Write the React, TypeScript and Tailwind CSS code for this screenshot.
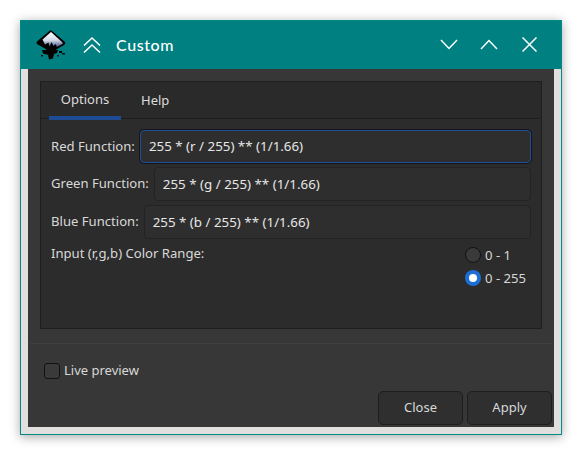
import React from 'react';

const FUNCTIONS = [
  { label: 'Red Function:', value: '255 * (r / 255) ** (1/1.66)', focused: true, height: 'h-[33px]', mt: 'mt-[11px]' },
  { label: 'Green Function:', value: '255 * (g / 255) ** (1/1.66)', focused: false, height: 'h-[34px]', mt: 'mt-[4px]' },
  { label: 'Blue Function:', value: '255 * (b / 255) ** (1/1.66)', focused: false, height: 'h-[34px]', mt: 'mt-[4px]' },
];

function InkscapeLogo() {
  return (
    <svg width="30" height="30" viewBox="0 0 30 30" className="block">
      <defs>
        <linearGradient id="ink" x1="0.5" y1="0" x2="0.55" y2="1">
          <stop offset="0" stopColor="#ffffff" />
          <stop offset="0.55" stopColor="#d5d9e6" />
          <stop offset="1" stopColor="#43558a" />
        </linearGradient>
      </defs>
      <path d="M14 0.5 Q15 0 16 1 L29 12 Q30 14 28 15 L21 19 L18 21 L11 20 L8 18 L1 14 Q0 12.5 1 11.5 Z" fill="#000000" />
      <path d="M15 2 L26 12 L27 13.5 L21 17 L19.5 14 L17.5 16 L15.5 12 L13.5 16.5 L12.5 12.5 L9 14.5 L6.5 9.5 Z" fill="url(#ink)" />
      <path d="M6 20 L22 20 L21 23 L18 24 L17 28.5 L13 29.5 L12 25 L7 23.5 Z" fill="#000000" />
      <rect x="23" y="21" width="3" height="2" fill="#000000" />
      <rect x="26" y="23" width="3" height="1.5" fill="#111111" />
      <rect x="5" y="25" width="2" height="1.5" fill="#111111" />
      <rect x="21" y="25" width="2" height="1.5" fill="#222222" />
    </svg>
  );
}

function Chevron({ d, w, h }: { d: string; w: number; h: number }) {
  return (
    <svg width={w} height={h} viewBox={`0 0 ${w} ${h}`} fill="none" stroke="#ffffff" strokeWidth="1.5" className="block">
      <path d={d} />
    </svg>
  );
}

function Radio({ checked, label }: { checked?: boolean; label: string }) {
  return (
    <div className="flex items-center gap-[4px] h-[16px]">
      {checked ? (
        <span className="w-[16px] h-[16px] rounded-full bg-[#1c6fd6] flex items-center justify-center">
          <span className="w-[8px] h-[8px] rounded-full bg-white" />
        </span>
      ) : (
        <span className="w-[16px] h-[16px] rounded-full bg-[#3a3a3a] border border-[#111111]" />
      )}
      <span className="text-[13.1px] text-[#d8d8d8] pt-[1px]">{label}</span>
    </div>
  );
}

export default function App() {
  return (
    <div className="w-[582px] h-[455px] bg-white pt-[20px] pl-[20px] font-['Noto_Sans',sans-serif] overflow-hidden">
      <div className="w-[542px] h-[415px] border border-[#008a85] bg-[#e0dfdd] flex flex-col shadow-[0_2px_10px_rgba(0,0,0,0.35)]">
        <div className="h-[48px] bg-[#008080] flex items-center shrink-0 pl-[15px] pr-[24px]">
          <InkscapeLogo />
          <div className="ml-[17px]">
            <Chevron w={18} h={17} d="M1 8.5 L9 1 L17 8.5 M1 15.5 L9 8 L17 15.5" />
          </div>
          <span className="ml-[15px] text-[16px] text-white font-['Lato',sans-serif] font-medium tracking-[0.6px]">Custom</span>
          <div className="ml-auto flex items-center -mt-px">
            <Chevron w={18} h={11} d="M1 1 L9 9.5 L17 1" />
            <div className="ml-[22px]">
              <Chevron w={18} h={11} d="M1 10 L9 1.5 L17 10" />
            </div>
            <div className="ml-[24px]">
              <Chevron w={15} h={15} d="M0.5 0.5 L14.5 14.5 M14.5 0.5 L0.5 14.5" />
            </div>
          </div>
        </div>

        <div className="flex-1 mx-[7px] mb-[7px] mt-0 bg-[#373737] flex flex-col">
          <div className="mx-[12px] mt-[12px] h-[248px] bg-[#2c2c2c] border border-[#1e1e1e] flex flex-col">
            <div className="h-[37px] border-b border-[#1e1e1e] bg-[#2a2a2a] flex pl-[8px] shrink-0">
              <div className="w-[72px] h-[38px] border-b-[4px] border-[#1d4b94] flex items-center justify-center pt-[1px] text-[13px] text-[#dcdcdc]">
                Options
              </div>
              <div className="ml-[20px] h-[36px] flex items-center pt-[1px] text-[13px] text-[#dcdcdc]">Help</div>
            </div>
            <div className="pl-[10px] pr-[10px]">
              {FUNCTIONS.map((fn) => (
                <div key={fn.label} className={`flex items-center gap-[5px] ${fn.mt}`}>
                  <span className="text-[13.1px] text-[#d8d8d8] whitespace-nowrap">{fn.label}</span>
                  <div
                    className={`flex-1 ${fn.height} rounded-[4px] bg-[#2e2e2e] flex items-center pl-[8px] text-[13.35px] text-[#e6e6e6] border ${
                      fn.focused ? 'border-[#1d4f9c] shadow-[0_0_0_1px_#151515]' : 'border-[#232323]'
                    }`}
                  >
                    {fn.value}
                  </div>
                </div>
              ))}
              <div className="flex justify-between mt-[5px]">
                <span className="text-[13.1px] text-[#d8d8d8]">Input (r,g,b) Color Range:</span>
                <div className="w-[66px] mt-[3px] flex flex-col gap-[7px]">
                  <Radio label="0 - 1" />
                  <Radio checked label="0 - 255" />
                </div>
              </div>
            </div>
          </div>

          <div className="mt-[14px] mx-[2px] border-t border-[#3f3f3f]" />

          <div className="flex items-center gap-[4px] mt-[17px] ml-[16px]">
            <span className="w-[16px] h-[16px] rounded-[3px] bg-[#3a3a3a] border border-[#111111]" />
            <span className="text-[13px] text-[#d8d8d8]">Live preview</span>
          </div>

          <div className="flex justify-end gap-[4px] mt-auto mr-[2px] mb-[2px]">
            <button className="w-[85px] h-[34px] rounded-[5px] bg-[#2f2f2f] border border-[#1e1e1e] text-[13px] text-[#d8d8d8]">Close</button>
            <button className="w-[85px] h-[34px] rounded-[5px] bg-[#2f2f2f] border border-[#1e1e1e] text-[13px] text-[#d8d8d8]">Apply</button>
          </div>
        </div>
      </div>
    </div>
  );
}
